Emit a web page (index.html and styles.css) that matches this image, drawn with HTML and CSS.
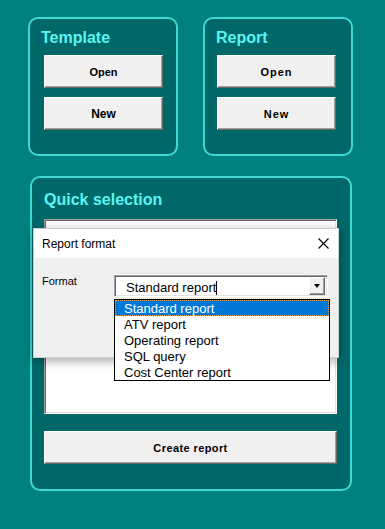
FILE: index.html
```html
<!DOCTYPE html>
<html>
<head>
<meta charset="utf-8">
<link rel="stylesheet" href="styles.css">
</head>
<body>
<div class="page">
  <div class="top-row">
    <section class="panel panel-small panel-template">
      <h2 class="panel-title">Template</h2>
      <div class="btn-stack">
        <button class="btn">Open</button>
        <button class="btn btn-strong">New</button>
      </div>
    </section>
    <section class="panel panel-small panel-report">
      <h2 class="panel-title">Report</h2>
      <div class="btn-stack">
        <button class="btn btn-spaced">Open</button>
        <button class="btn btn-spaced">New</button>
      </div>
    </section>
  </div>

  <section class="panel panel-quick">
    <h2 class="panel-title quick-title">Quick selection</h2>
    <div class="listbox"></div>
    <button class="btn btn-wide">Create report</button>
  </section>

  <div class="dialog">
    <div class="dialog-titlebar">
      <span class="dialog-title">Report format</span>
      <svg class="dialog-close" width="11" height="11" viewBox="0 0 11 11">
        <path d="M0.5 0.5 L10.5 10.5 M10.5 0.5 L0.5 10.5" stroke="#000" stroke-width="1.1" fill="none"/>
      </svg>
    </div>
    <div class="dialog-body">
      <span class="field-label">Format</span>
      <div class="combo-wrap">
        <div class="combo">
          <span class="combo-text">Standard report<span class="caret"></span></span>
          <span class="combo-arrow"><span class="arrow-tri"></span></span>
        </div>
        <ul class="dropdown">
          <li class="dropdown-item selected">Standard report</li>
          <li class="dropdown-item">ATV report</li>
          <li class="dropdown-item">Operating report</li>
          <li class="dropdown-item">SQL query</li>
          <li class="dropdown-item">Cost Center report</li>
        </ul>
      </div>
    </div>
  </div>
</div>
</body>
</html>
```

FILE: styles.css
```css
* { box-sizing: border-box; }

html, body {
  margin: 0;
  padding: 0;
}

body {
  width: 385px;
  height: 529px;
  background: #008080;
  font-family: "Liberation Sans", Arial, sans-serif;
  overflow: hidden;
}

.page {
  position: relative;
  width: 385px;
  height: 529px;
  padding: 17px 0 0 28px;
}

.top-row {
  display: flex;
  gap: 25px;
}

.panel {
  background: #006868;
  border: 2px solid #3fd8d2;
  border-radius: 10px;
  display: flex;
  flex-direction: column;
}

.panel-small {
  width: 150px;
  height: 139px;
  padding-top: 10px;
}

.panel-template { padding-left: 14px; }
.panel-report { padding-left: 12px; }

.panel-title {
  margin: 0 0 0 -3px;
  font-size: 16px;
  line-height: 18px;
  font-weight: bold;
  color: #5cf4f2;
}

.panel-report .panel-title { margin-left: -1px; }

.btn-stack {
  display: flex;
  flex-direction: column;
  gap: 9px;
  margin-top: 8px;
}

.btn {
  display: block;
  width: 119px;
  height: 33px;
  padding: 0;
  margin: 0;
  background: #f0f0f0;
  border: 1px solid;
  border-color: #ffffff #696969 #696969 #ffffff;
  box-shadow: inset -1px -1px 0 #a0a0a0;
  font-family: "Liberation Sans", Arial, sans-serif;
  font-size: 11px;
  font-weight: bold;
  color: #000;
  text-align: center;
}

.btn-strong { font-size: 12px; }
.btn-spaced { letter-spacing: 1px; }

.panel-quick {
  margin: 20px 0 0 2px;
  width: 322px;
  height: 315px;
  padding: 13px 0 0 12px;
}

.quick-title { margin-left: 0; }

.listbox {
  margin-top: 10px;
  width: 293px;
  height: 195px;
  background: #fff;
  border: 1px solid;
  border-color: #a0a0a0 #ffffff #ffffff #a0a0a0;
  box-shadow: inset 1px 1px 0 #696969, inset -1px -1px 0 #e3e3e3;
}

.btn-wide {
  margin-top: 17px;
  width: 293px;
  letter-spacing: 0.4px;
}

/* Dialog overlay */
.dialog {
  position: absolute;
  left: 33px;
  top: 228px;
  width: 306px;
  height: 130px;
  background: #f0f0f0;
  border: 1px solid #c8d2d2;
  box-shadow: 0 3px 10px rgba(0, 0, 0, 0.35);
  display: flex;
  flex-direction: column;
}

.dialog-titlebar {
  height: 29px;
  background: #fff;
  display: flex;
  align-items: center;
  justify-content: space-between;
  padding: 0 9px 0 8px;
}

.dialog-title {
  font-size: 12px;
  color: #000;
}

.dialog-close { display: block; }

.dialog-body {
  display: grid;
  grid-template-columns: 72px 214px;
  align-items: start;
  padding: 17px 0 0 8px;
}

.field-label {
  font-size: 11px;
  line-height: 13px;
  color: #000;
}

.combo-wrap {
  position: relative;
}

.combo {
  height: 22px;
  background: #fff;
  border: 1px solid;
  border-color: #a0a0a0 #ffffff #ffffff #a0a0a0;
  box-shadow: inset 1px 1px 0 #696969, inset -1px -1px 0 #e3e3e3;
  display: flex;
  align-items: stretch;
  padding: 1px;
}

.combo-text {
  flex: 1;
  font-size: 13px;
  line-height: 19px;
  padding-left: 10px;
  padding-top: 1px;
  color: #000;
  white-space: nowrap;
}

.caret {
  display: inline-block;
  width: 1px;
  height: 14px;
  background: #000;
  vertical-align: -3px;
}

.combo-arrow {
  width: 16px;
  background: #f0f0f0;
  border: 1px solid;
  border-color: #ffffff #696969 #696969 #ffffff;
  box-shadow: inset -1px -1px 0 #a0a0a0;
  display: flex;
  align-items: center;
  justify-content: center;
  margin-right: 1px;
}

.arrow-tri {
  width: 0;
  height: 0;
  border-left: 3.5px solid transparent;
  border-right: 3.5px solid transparent;
  border-top: 4px solid #000;
}

.dropdown {
  position: absolute;
  left: 0;
  top: 24px;
  width: 216px;
  margin: 0;
  padding: 0;
  list-style: none;
  background: #fff;
  border: 1px solid #000;
}

.dropdown-item {
  height: 16px;
  line-height: 17px;
  font-size: 13px;
  padding-left: 9px;
  color: #000;
  white-space: nowrap;
}

.dropdown-item.selected {
  background: #0078d7;
  color: #fff;
  outline: 1px dotted #f0a040;
  outline-offset: -1px;
}
```
